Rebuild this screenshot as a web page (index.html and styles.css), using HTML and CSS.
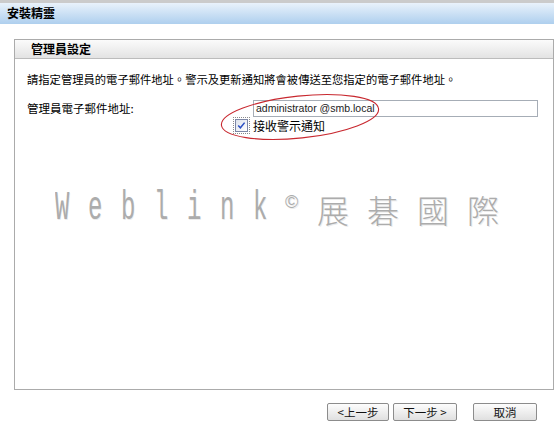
FILE: index.html
```html
<!DOCTYPE html>
<html lang="zh-Hant">
<head>
<meta charset="utf-8">
<title>安裝精靈</title>
<link rel="stylesheet" href="styles.css">
</head>
<body>
<div class="titlebar">安裝精靈</div>
<div class="main">
  <div class="panel">
    <div class="panel-header">管理員設定</div>
    <div class="panel-body">
      <p class="desc">請指定管理員的電子郵件地址。警示及更新通知將會被傳送至您指定的電子郵件地址。</p>
      <div class="form">
        <div class="field-label">管理員電子郵件地址:</div>
        <div class="input">administrator @smb.local</div>
        <span class="check"><svg width="11" height="11" viewBox="0 0 11 11"><path d="M2.2 5.4 L4.4 7.8 L8.6 2.6" fill="none" stroke="#2a4fc4" stroke-width="1.5"/></svg></span>
        <div class="check-label">接收警示通知</div>
      </div>
    </div>
    <svg class="ring" width="165" height="56" viewBox="0 0 165 56"><ellipse cx="82" cy="27" rx="79" ry="21" transform="rotate(-6 82 27)" fill="none" stroke="#c8282f" stroke-width="1.1"/></svg>
    <div class="wm wm-latin">Weblink</div>
    <div class="wm wm-copy">©</div>
    <div class="wm wm-cjk">展碁國際</div>
  </div>
  <div class="footer">
    <button class="btn">&lt;上一步</button>
    <button class="btn btn-wide">下一步 &gt;</button>
    <button class="btn btn-wide btn-cancel">取消</button>
  </div>
</div>
</body>
</html>
```
FILE: styles.css
```css
html, body {
  margin: 0;
  padding: 0;
  background: #ffffff;
}
body {
  width: 554px;
  height: 430px;
  overflow: hidden;
  font-family: "Noto Sans CJK TC", "Noto Sans", sans-serif;
  font-size: 12px;
  color: #000;
}
.titlebar {
  height: 24px;
  box-sizing: border-box;
  border-top: 3px solid #cbcbcb;
  background: linear-gradient(#e9f2fb, #aecfee);
  padding-left: 7px;
  font-weight: bold;
  line-height: 20px;
}
.main {
  padding: 15px 0 0 14px;
}
.panel {
  position: relative;
  height: 351px;
  box-sizing: border-box;
  border: 1px solid #ababab;
  background: #fff;
}
.panel-header {
  height: 18px;
  border-bottom: 1px solid #bcbcbc;
  background: linear-gradient(#fbfbfb, #e3e3e3);
  padding-left: 16px;
  font-weight: bold;
  line-height: 18px;
}
.panel-body {
  padding: 13px 0 0 12px;
}
.desc {
  margin: 0;
  font-size: 11.3px;
  line-height: 14px;
}
.form {
  display: grid;
  grid-template-columns: 208px 18px 285px;
  margin-top: 14px;
}
.field-label {
  grid-column: 1 / 3;
  font-size: 11.5px;
  line-height: 17px;
}
.input {
  grid-column: 3;
  height: 17px;
  box-sizing: border-box;
  border: 1px solid #a6adb6;
  padding-left: 2px;
  font-family: "Liberation Sans", Arial, sans-serif;
  font-size: 10.5px;
  line-height: 15px;
  color: #222;
}
.check {
  grid-column: 2;
  width: 13px;
  height: 13px;
  box-sizing: border-box;
  margin-top: 2px;
  border: 1px solid #7d87a6;
  background: linear-gradient(135deg, #dde2ec, #ffffff);
  outline: 1px dotted #8a8a8a;
  outline-offset: 1px;
  display: flex;
  align-items: center;
  justify-content: center;
}
.check-label {
  grid-column: 3;
  margin-top: 1px;
  line-height: 16px;
}
.ring {
  position: absolute;
  left: 203px;
  top: 50px;
}
.wm {
  position: absolute;
  color: #acacac;
  text-shadow: 1px 1px 0 #ececec;
  white-space: nowrap;
}
.wm-latin {
  left: 40px;
  top: 149px;
  font-family: "Liberation Mono", "Courier New", monospace;
  font-size: 40px;
  line-height: 40px;
  letter-spacing: 31px;
  transform: scaleX(0.6);
  transform-origin: 0 0;
}
.wm-copy {
  left: 270px;
  top: 153px;
  font-family: "Liberation Sans", Arial, sans-serif;
  font-size: 18px;
  line-height: 18px;
}
.wm-cjk {
  left: 302px;
  top: 153px;
  font-family: "Noto Sans CJK TC", sans-serif;
  font-weight: 300;
  font-size: 32px;
  line-height: 32px;
  letter-spacing: 18px;
}
.footer {
  display: flex;
  justify-content: flex-end;
  gap: 4px;
  padding: 13px 17px 0 0;
}
.btn {
  width: 62px;
  height: 18px;
  box-sizing: border-box;
  padding: 0;
  border: 1px solid #8c8c8c;
  border-radius: 2px;
  background: linear-gradient(#fdfdfd, #e0e0e0);
  font-family: "Noto Sans CJK TC", sans-serif;
  font-size: 11.5px;
  line-height: 16px;
  color: #111;
  text-align: center;
}
.btn-wide {
  width: 64px;
}
.btn-cancel {
  margin-left: 12px;
}
```
